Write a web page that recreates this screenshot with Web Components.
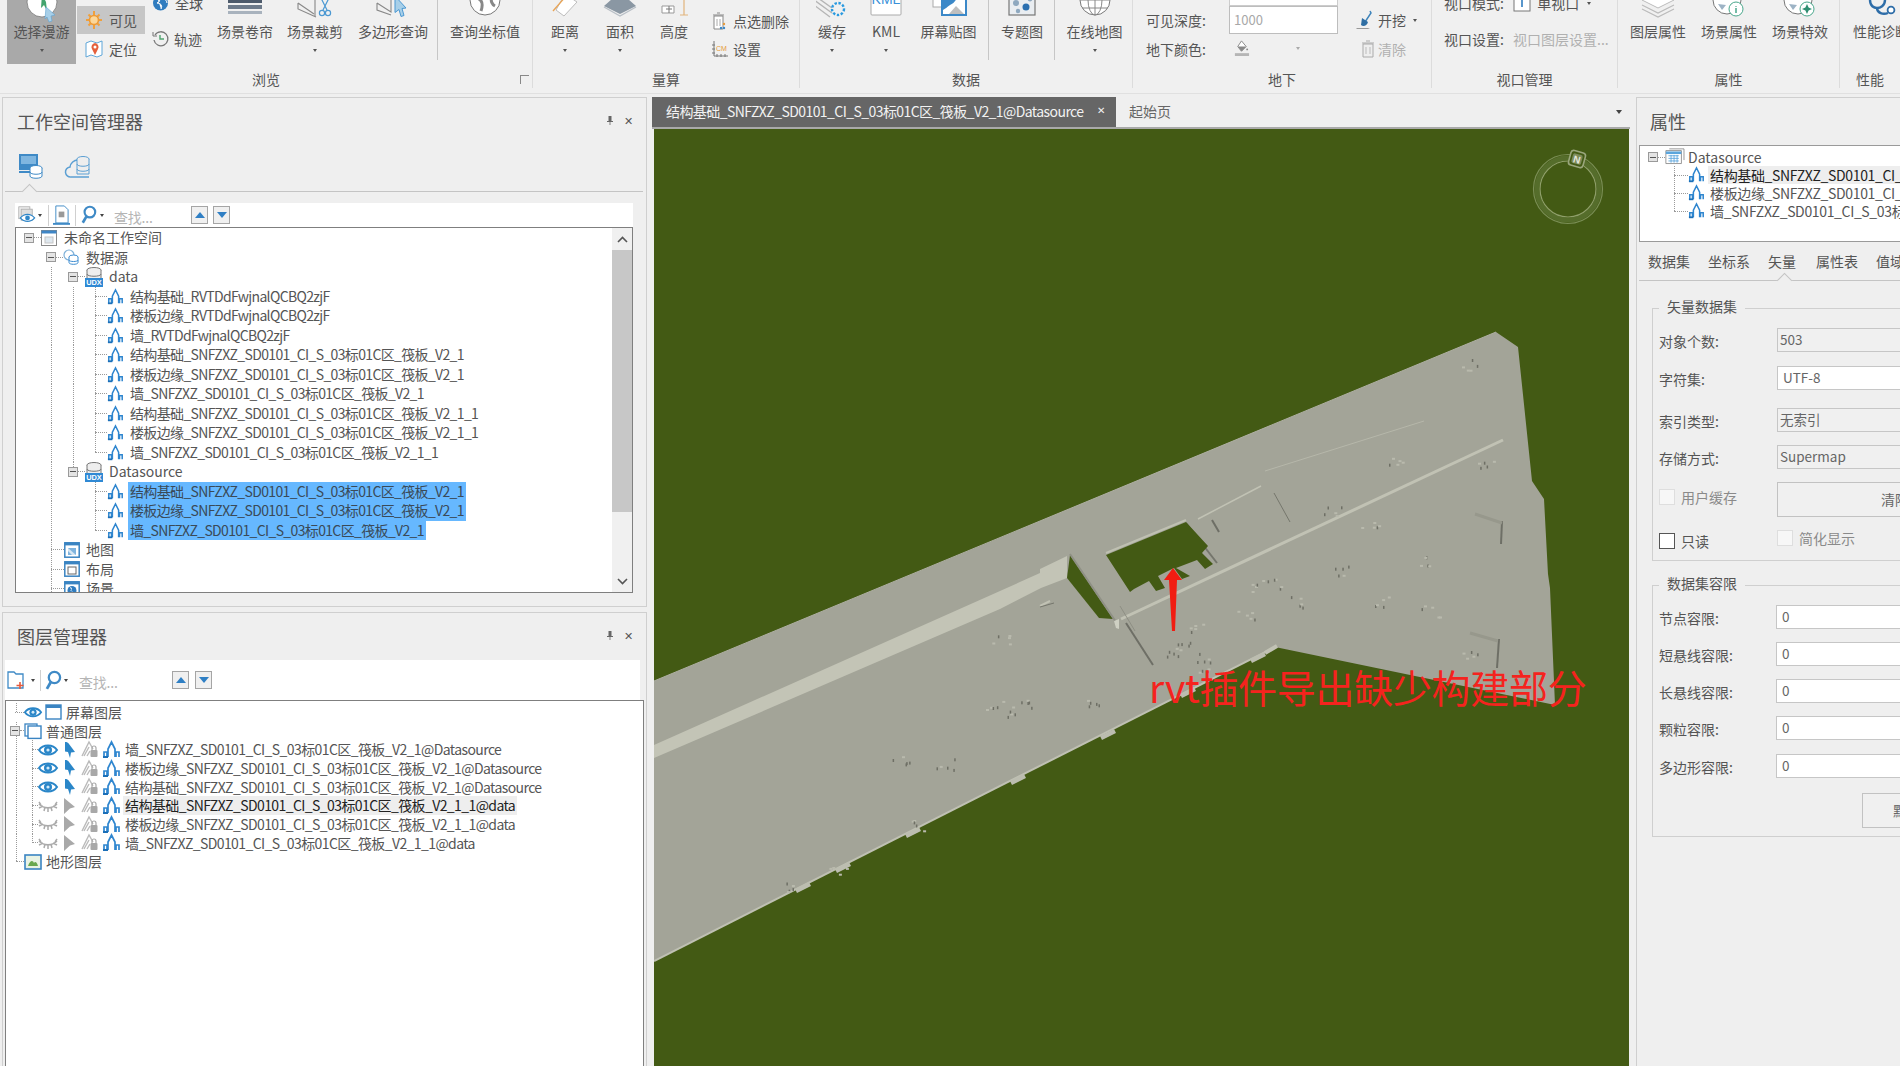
<!DOCTYPE html>
<html lang="zh"><head><meta charset="utf-8"><title>SuperMap</title>
<style>
html,body{margin:0;height:100%;overflow:hidden;background:#efefef}
body{font:14px/18px "Noto Sans CJK SC","Noto Sans",sans-serif;color:#555;width:1900px;height:1066px}
</style></head><body>
<x-app>
  <x-ribbon slot="ribbon">
    <x-group label="浏览" width="533" launcher>
      <x-big width="69" left="7" icon="select" w="40" active dd>选择漫游</x-big>
      <x-col width="68" left="1">
        <x-small icon="sun" w="18" pad="8" h="28" top="6" active>可见</x-small>
        <x-small icon="pin" w="18" pad="8" h="29" top="0">定位</x-small>
      </x-col>
      <x-col width="65">
        <x-small icon="globesm" w="17" pad="7" h="28" top="-11">全球</x-small>
        <x-small icon="clock" w="16" pad="7" h="28" top="8">轨迹</x-small>
      </x-col>
      <x-big width="70" icon="curtain" w="34">场景卷帘</x-big>
      <x-big width="70" icon="clip" w="36" dd>场景裁剪</x-big>
      <x-big width="86" icon="polyq" w="36">多边形查询</x-big>
      <x-sep></x-sep>
      <x-big width="92" icon="globeg" w="32">查询坐标值</x-big>
    </x-group>
    <x-group label="量算" width="267">
      <x-big width="60" left="2" icon="ruler" w="28" dd>距离</x-big>
      <x-big width="50" icon="area" w="34" dd>面积</x-big>
      <x-big width="58" icon="height" w="32">高度</x-big>
      <x-col width="97">
        <x-small icon="trashdot" w="15" pad="9" gap="6" h="28" top="7">点选删除</x-small>
        <x-small icon="cm" w="16" pad="9" gap="5" h="28" top="0">设置</x-small>
      </x-col>
    </x-group>
    <x-group label="数据" width="333">
      <x-big width="60" left="2" icon="cache" w="32" dd>缓存</x-big>
      <x-big width="48" icon="kml" w="32" dd>KML</x-big>
      <x-big width="77" icon="shot" w="36">屏幕贴图</x-big>
      <x-sep></x-sep>
      <x-big width="62" left="1" icon="theme" w="32">专题图</x-big>
      <x-sep></x-sep>
      <x-big width="75" left="1" icon="wire" w="34" dd>在线地图</x-big>
    </x-group>
    <x-group label="地下" width="299">
      <x-under></x-under>
    </x-group>
    <x-group label="视口管理" width="186">
      <x-viewport></x-viewport>
    </x-group>
    <x-group label="属性" width="222">
      <x-big width="70" left="5" icon="layersw" w="34">图层属性</x-big>
      <x-big width="72" icon="sceneinfo" w="34">场景属性</x-big>
      <x-big width="70" icon="scenefx" w="34">场景特效</x-big>
    </x-group>
    <x-group label="性能" width="60" last>
      <x-big width="72" left="5" icon="steth" w="30">性能诊断</x-big>
    </x-group>
  </x-ribbon>

  <x-panel slot="left" title-text="工作空间管理器" height="510">
    <x-wstabs></x-wstabs>
    <x-findbar kind="ws"></x-findbar>
    <x-tree height="366" scroll top="0" rh="19.5">
      <x-row ind="8" exp ic="wsp:16:7">未命名工作空间</x-row>
      <x-row ind="30" exp ic="dsrc:16:7">数据源</x-row>
      <x-row ind="52" exp ic="udx:18:6" gd="35">data</x-row>
      <x-row ind="79" stub="12" ic="vec:17:6" gd="35,57,79">结构基础_RVTDdFwjnalQCBQ2zjF</x-row>
      <x-row ind="79" stub="12" ic="vec:17:6" gd="35,57,79">楼板边缘_RVTDdFwjnalQCBQ2zjF</x-row>
      <x-row ind="79" stub="12" ic="vec:17:6" gd="35,57,79">墙_RVTDdFwjnalQCBQ2zjF</x-row>
      <x-row ind="79" stub="12" ic="vec:17:6" gd="35,57,79">结构基础_SNFZXZ_SD0101_CI_S_03标01C区_筏板_V2_1</x-row>
      <x-row ind="79" stub="12" ic="vec:17:6" gd="35,57,79">楼板边缘_SNFZXZ_SD0101_CI_S_03标01C区_筏板_V2_1</x-row>
      <x-row ind="79" stub="12" ic="vec:17:6" gd="35,57,79">墙_SNFZXZ_SD0101_CI_S_03标01C区_筏板_V2_1</x-row>
      <x-row ind="79" stub="12" ic="vec:17:6" gd="35,57,79">结构基础_SNFZXZ_SD0101_CI_S_03标01C区_筏板_V2_1_1</x-row>
      <x-row ind="79" stub="12" ic="vec:17:6" gd="35,57,79">楼板边缘_SNFZXZ_SD0101_CI_S_03标01C区_筏板_V2_1_1</x-row>
      <x-row ind="79" stub="12" ic="vec:17:6" gd="35,57" gh="79">墙_SNFZXZ_SD0101_CI_S_03标01C区_筏板_V2_1_1</x-row>
      <x-row ind="52" exp ic="udx:18:6" gd="35" gh="57">Datasource</x-row>
      <x-row ind="79" stub="12" ic="vec:17:6" gd="35,79" sel>结构基础_SNFZXZ_SD0101_CI_S_03标01C区_筏板_V2_1</x-row>
      <x-row ind="79" stub="12" ic="vec:17:6" gd="35,79" sel>楼板边缘_SNFZXZ_SD0101_CI_S_03标01C区_筏板_V2_1</x-row>
      <x-row ind="79" stub="12" ic="vec:17:6" gd="35" gh="79" sel>墙_SNFZXZ_SD0101_CI_S_03标01C区_筏板_V2_1</x-row>
      <x-row ind="35" stub="13" ic="map:16:6" gd="35">地图</x-row>
      <x-row ind="35" stub="13" ic="lay:16:6" gd="35">布局</x-row>
      <x-row ind="35" stub="13" ic="scn:16:6" gd="35">场景</x-row>
    </x-tree>
  </x-panel>

  <x-panel slot="left" title-text="图层管理器" height="470" flush>
    <x-findbar kind="layer"></x-findbar>
    <x-tree height="380" top="2" rh="18.67" wide>
      <x-row ind="9" stub="9" ic="eye:18:3,win:17:4" gh="10">屏幕图层</x-row>
      <x-row ind="4" exp stub="4" ic="lyr:18:4" gd="10">普通图层</x-row>
      <x-row ind="26" stub="6" ic="eye:20:4,ptr:14:5,lock:17:4,vec:19:4" gd="10,26" ls="-.59">墙_SNFZXZ_SD0101_CI_S_03标01C区_筏板_V2_1@Datasource</x-row>
      <x-row ind="26" stub="6" ic="eye:20:4,ptr:14:5,lock:17:4,vec:19:4" gd="10,26" ls="-.59">楼板边缘_SNFZXZ_SD0101_CI_S_03标01C区_筏板_V2_1@Datasource</x-row>
      <x-row ind="26" stub="6" ic="eye:20:4,ptr:14:5,lock:17:4,vec:19:4" gd="10,26" ls="-.59">结构基础_SNFZXZ_SD0101_CI_S_03标01C区_筏板_V2_1@Datasource</x-row>
      <x-row ind="26" stub="6" ic="eyex:20:4,ptrg:14:5,lock:17:4,vec:19:4" gd="10,26" ls="-.59" hl>结构基础_SNFZXZ_SD0101_CI_S_03标01C区_筏板_V2_1_1@data</x-row>
      <x-row ind="26" stub="6" ic="eyex:20:4,ptrg:14:5,lock:17:4,vec:19:4" gd="10,26" ls="-.59">楼板边缘_SNFZXZ_SD0101_CI_S_03标01C区_筏板_V2_1_1@data</x-row>
      <x-row ind="26" stub="6" ic="eyex:20:4,ptrg:14:5,lock:17:4,vec:19:4" gd="10" gh="26" ls="-.59">墙_SNFZXZ_SD0101_CI_S_03标01C区_筏板_V2_1_1@data</x-row>
      <x-row ind="10" stub="8" ic="ter:18:4" gh="10">地形图层</x-row>
    </x-tree>
  </x-panel>

  <x-doc slot="center"></x-doc>

  <x-props slot="right"></x-props>
</x-app>

<script>
const vec=c=>`<svg viewBox="0 0 19 17"><path d="M2 16v-5h3v5M6 16V8l3.5-7L13 8v8M14 16v-5h3v5" fill="none" stroke="${c}" stroke-width="1.7"/><path d="M1 16h5" stroke="#1b6fb8" stroke-width="2"/></svg>`;
const eye=`<svg viewBox="0 0 20 14"><path d="M1 7C5 1 15 1 19 7 15 13 5 13 1 7Z" fill="#fff" stroke="#2a86c8" stroke-width="2"/><circle cx="10" cy="7" r="4" fill="#2a86c8"/><circle cx="10" cy="7" r="1.6" fill="#cfe8f8"/></svg>`;
const ICONS={
 vec:vec('#2f86cf'),eye,
 ptr:`<svg viewBox="0 0 14 18"><path d="M3 1c2 0 3 .5 4 2l6 8-4 .5-1 5.5-2-6-3-.5Z" fill="#2a86c8"/></svg>`,
 ptrg:`<svg viewBox="0 0 14 18"><path d="M2 1l11 9-5 1.5L2 17Z" fill="#a9a9a9"/></svg>`,
 eyex:`<svg viewBox="0 0 20 14"><path d="M1 5c5 5 13 5 18 0M3 6 1 3M7 8 6 12M13 8l1 4M17 6l2-3M10 9v4M1 9l4-2M19 9l-4-2" fill="none" stroke="#aaa" stroke-width="1.5"/></svg>`,
 lock:`<svg viewBox="0 0 17 17"><path d="M1 15 8 1l4 7M3 15l5-9M6 15l3-5" fill="none" stroke="#bbb" stroke-width="1.4"/><rect x="9.5" y="9" width="7" height="7" rx="1" fill="#a8a8a8"/><path d="M11 9V7a2 2 0 0 1 4 0v2" fill="none" stroke="#a8a8a8" stroke-width="1.2"/></svg>`,
 wsp:`<svg viewBox="0 0 16 16"><rect x=".5" y=".5" width="15" height="15" fill="#fff" stroke="#8a8a8a"/><rect x=".5" y=".5" width="15" height="3" fill="#3f86c6"/><rect x="4" y="7" width="8" height="6" fill="#dfe8ef" stroke="#c5c5c5"/></svg>`,
 dsrc:`<svg viewBox="0 0 16 16"><circle cx="6" cy="6" r="5" fill="none" stroke="#7fb1d8" stroke-width="1.2"/><ellipse cx="10.5" cy="8" rx="4.5" ry="2" fill="#fff" stroke="#3b8bd0"/><path d="M6 8v5.5c0 2.4 9 2.4 9 0V8" fill="#fff" stroke="#3b8bd0"/><path d="M6 11c0 2 9 2 9 0" fill="none" stroke="#3b8bd0"/></svg>`,
 udx:`<svg viewBox="0 0 18 20"><ellipse cx="9" cy="3" rx="7" ry="2.5" fill="#eee" stroke="#777"/><path d="M2 3v9h14V3" fill="#eee" stroke="#777"/><path d="M2 7c0 3 14 3 14 0" fill="none" stroke="#777"/><rect y="11" width="18" height="9" fill="#2f89d4"/><text x="9" y="18.4" font-size="7.4" font-weight="700" fill="#fff" text-anchor="middle" font-family="Liberation Sans">UDX</text></svg>`,
 map:`<svg viewBox="0 0 16 16"><rect x=".8" y=".8" width="14.4" height="14.4" fill="#fff" stroke="#3a84c2" stroke-width="1.5"/><rect x=".8" y=".8" width="14.4" height="2.6" fill="#3a84c2"/><path d="M4 6h8v7H4Z" fill="#7fb4de"/><path d="M4 6l8 7H8L4 9Z" fill="#d5e6f3"/></svg>`,
 lay:`<svg viewBox="0 0 16 16"><rect x=".8" y=".8" width="14.4" height="14.4" fill="#fff" stroke="#3a84c2" stroke-width="1.5"/><rect x=".8" y=".8" width="14.4" height="2.6" fill="#3a84c2"/><rect x="4" y="6" width="8" height="7" fill="#fff" stroke="#666"/></svg>`,
 scn:`<svg viewBox="0 0 16 16"><rect x=".8" y=".8" width="14.4" height="14.4" fill="#fff" stroke="#3a84c2" stroke-width="1.5"/><rect x=".8" y=".8" width="14.4" height="2.6" fill="#3a84c2"/><circle cx="8" cy="9.5" r="4.5" fill="#2f7cbf"/><path d="M6 6c3 1 2 3 0 4 2 0 4 1 3 3" fill="#fff"/></svg>`,
 win:`<svg viewBox="0 0 17 16"><rect x="1" y="1" width="15" height="14" fill="#fff" stroke="#3a84c2" stroke-width="1.4"/><rect x="1" y="1" width="15" height="3" fill="#3a84c2"/></svg>`,
 lyr:`<svg viewBox="0 0 18 16"><rect x="1" y="1" width="12" height="12" fill="#fff" stroke="#3a84c2" stroke-width="1.3"/><rect x="4" y="3" width="13" height="12.4" fill="#fff" stroke="#3a84c2" stroke-width="1.4"/></svg>`,
 ter:`<svg viewBox="0 0 18 16"><rect x="1" y="1" width="16" height="14" fill="#e9f3e4" stroke="#3a84c2" stroke-width="1.6"/><path d="M4 12c2-6 5-6 6-3 1-2 3-1 4 3Z" fill="#69a84f"/></svg>`,
 select:`<svg viewBox="0 0 40 25"><circle cx="20" cy="2" r="15" fill="#fff" stroke="#777" stroke-width=".8"/><path d="M20-6l4 8 1 9-3-6-3 3Z" fill="#43a46f"/><path d="M24 7l9 8-4 1 1 5-3 1-2-5-2 2Z" fill="#a7cfe8" stroke="#5fa3d1" stroke-width=".6"/></svg>`,
 sun:`<svg viewBox="0 0 18 20"><g stroke="#f0a03c" stroke-width="2"><path d="M9 1v4M9 15v4M1 10h4M13 10h4M3.5 4.5l3 3M11.5 12.5l3 3M3.5 15.5l3-3M11.5 7.5l3-3"/></g><circle cx="9" cy="10" r="4.5" fill="#fbd79a" stroke="#ee9a35" stroke-width="1.6"/></svg>`,
 pin:`<svg viewBox="0 0 18 20"><path d="M1 4l5-2 6 2 5-2v14l-5 2-6-2-5 2Z" fill="#fff" stroke="#5fa6d8"/><path d="M11 4a4 4 0 0 1 3 6l-3 6-3-6a4 4 0 0 1 3-6Z" fill="#e5603c" transform="translate(-1 0)"/><circle cx="10" cy="8" r="1.5" fill="#fff"/></svg>`,
 globesm:`<svg viewBox="0 0 17 18"><circle cx="8.5" cy="9" r="7.5" fill="#2f7cbf"/><path d="M5 3c4 2 3 5 0 6 3 0 6 2 4 6M12 3c1 3 3 4 3 6" fill="#fff" stroke="#fff"/></svg>`,
 clock:`<svg viewBox="0 0 16 18"><path d="M3 5a7 7 0 1 1-1 5" fill="none" stroke="#777" stroke-width="1.3"/><path d="M1 2v4h4" fill="none" stroke="#777"/><path d="M8 5v4h4" fill="none" stroke="#4fa36f" stroke-width="1.4"/></svg>`,
 curtain:`<svg viewBox="0 0 34 25"><rect y="0" width="34" height="3" fill="#4d5a6b"/><rect x="0" y="5" width="34" height="4" fill="#6d7a8a"/><rect x="0" y="11" width="34" height="3" fill="#a8b2bd"/></svg>`,
 clip:`<svg viewBox="0 0 36 25"><path d="M1 3l16 11M1 3v6l18 8M18-5v22" fill="none" stroke="#888" stroke-width="1.1"/><g stroke="#4b98d2" fill="none" stroke-width="1.2"><path d="M24-2l6 12M32-2l-6 12"/><circle cx="25" cy="13" r="2.6"/><circle cx="31" cy="13" r="2.6"/></g></svg>`,
 polyq:`<svg viewBox="0 0 36 25"><path d="M2 3l14 9V-4M2 3v7l14 5" fill="none" stroke="#888" stroke-width="1.1"/><path d="M20-4l11 12-4 .5 2 7-3 1-2-7-4 3Z" fill="#a7cfe8" stroke="#4b98d2"/></svg>`,
 globeg:`<svg viewBox="0 0 32 25"><circle cx="16" cy="0" r="15" fill="#fff" stroke="#777"/><path d="M8-2c6 2 6 7 4 13M24-5c-4 6 0 10 2 11" fill="none" stroke="#888" stroke-width="3"/></svg>`,
 ruler:`<svg viewBox="0 0 28 25"><path d="M14-6l12 8-13 14-8-6Z" fill="#fff" stroke="#bdbdbd"/><path d="M2 11L16-5" stroke="#e9a353" stroke-width="1.3"/></svg>`,
 area:`<svg viewBox="0 0 34 25"><path d="M17-8l16 14-16 8L1 6Z" fill="#8a97a3"/><path d="M1 7l16 9 16-9" fill="none" stroke="#b8bfc6" stroke-width="1.4"/></svg>`,
 height:`<svg viewBox="0 0 32 25"><path d="M4 6h12v7H4Z" fill="#fff" stroke="#999"/><path d="M8 9h6M11 6v7" stroke="#777"/><path d="M26-6v21M22 15h8" stroke="#e2b47c" stroke-width="1.2"/></svg>`,
 trashdot:`<svg viewBox="0 0 15 18"><path d="M2 4h9v13H2Z" fill="#fff" stroke="#888"/><path d="M1 3h11M5 1h3" stroke="#888"/><path d="M5 7v7M8 7v7" stroke="#aaa"/><circle cx="12" cy="12" r="1.2" fill="#e59a3c"/><circle cx="12" cy="16" r="1.2" fill="#3a88c8"/><circle cx="9" cy="16" r="1.2" fill="#3a88c8"/></svg>`,
 cm:`<svg viewBox="0 0 16 18"><path d="M2 1v15h14" fill="none" stroke="#777"/><path d="M0 13h3M0 9h3M0 5h3M5 14v3M9 14v3M13 14v3" stroke="#777"/><text x="4" y="11" font-size="7" fill="#e59a3c" font-family="Liberation Sans">CM</text></svg>`,
 cache:`<svg viewBox="0 0 32 25"><g stroke="#b5b5b5" stroke-width="1.4"><path d="M-2 0l18 13M2-2l14 10M-2 5l16 12"/></g><circle cx="22" cy="9" r="6" fill="none" stroke="#2a9ae0" stroke-width="2.4" stroke-dasharray="2.4 1.6"/></svg>`,
 kml:`<svg viewBox="0 0 32 25"><rect x="1" y="-10" width="30" height="25" rx="1" fill="#fff" stroke="#aaa"/><text x="16" y="4" font-size="14" fill="#3a90d8" text-anchor="middle" font-family="Liberation Sans">KML</text></svg>`,
 shot:`<svg viewBox="0 0 36 25"><rect x="2" y="-8" width="22" height="15" fill="#fff" stroke="#aaa"/><rect x="11" y="-6" width="24" height="21" fill="#fff" stroke="#3b88c8" stroke-width="2"/><path d="M12-5h15c-2 6-4 8-8 10-3 2-5 4-7 5Z" fill="#3b88c8"/><path d="M18 14l7-8 8 8Z" fill="#bfbfbf"/></svg>`,
 theme:`<svg viewBox="0 0 32 25"><rect x="3" y="-8" width="26" height="23" fill="#e9edf1" stroke="#777" stroke-width="1.2"/><circle cx="20" cy="7" r="3.5" fill="#2a6fb0"/><circle cx="10" cy="3" r="3" fill="#8ea8bf"/><circle cx="24" cy="-1" r="2.4" fill="#8ea8bf"/><circle cx="12" cy="11" r="2.2" fill="#8ea8bf"/></svg>`,
 wire:`<svg viewBox="0 0 34 25"><circle cx="17" cy="0" r="15" fill="#fff" stroke="#777"/><path d="M2 0h30M4 8h26M17-15v30" stroke="#888" fill="none"/><ellipse cx="17" cy="0" rx="7" ry="15" fill="none" stroke="#888"/></svg>`,
 layersw:`<svg viewBox="0 0 34 25"><path d="M17-8l16 8-16 8L1 0Z" fill="#fff" stroke="#bbb"/><path d="M1 5l16 8 16-8M1 9l16 8 16-8" fill="none" stroke="#bbb" stroke-width="1.2"/></svg>`,
 sceneinfo:`<svg viewBox="0 0 34 25"><circle cx="15" cy="0" r="14" fill="#fff" stroke="#777"/><path d="M6 4l8 1-4 5Z" fill="#9db3c5"/><circle cx="24" cy="9" r="7" fill="#fff" stroke="#48a78b"/><path d="M24 6v.8M24 8v5" stroke="#48a78b" stroke-width="1.5"/></svg>`,
 scenefx:`<svg viewBox="0 0 34 25"><circle cx="15" cy="0" r="14" fill="#fff" stroke="#777"/><path d="M6 4l8 1-4 5Z" fill="#9db3c5"/><circle cx="24" cy="9" r="7" fill="#fff" stroke="#48a78b"/><path d="M24 4l1.6 3.4L29 9l-3.4 1.6L24 14l-1.6-3.4L19 9l3.4-1.6Z" fill="#2f8f72"/></svg>`,
 steth:`<svg viewBox="0 0 30 25"><path d="M4-8v8c0 6 4 8 7 8s8-2 8-8v-8" fill="none" stroke="#2e6da8" stroke-width="2.4"/><path d="M11 8c0 5 6 7 11 5" fill="none" stroke="#2e6da8" stroke-width="2.4"/><circle cx="25" cy="10" r="3.4" fill="#fff" stroke="#2e6da8" stroke-width="1.8"/></svg>`,
 shovel:`<svg viewBox="0 0 18 20"><path d="M14 1l1 2-6 9" stroke="#3e84bb" stroke-width="1.5" fill="none"/><path d="M6 8l6 4c-1 4-5 5-7 3Z" fill="#2f6ea3"/><path d="M1 18h11l2 1H0Z" fill="#999"/></svg>`,
 trashg:`<svg viewBox="0 0 14 18"><path d="M2 4h10v13H2Z" fill="#eee" stroke="#aaa"/><path d="M1 3h12M5 1h4" stroke="#aaa"/><path d="M5 7v7M9 7v7" stroke="#bbb"/></svg>`,
 bucket:`<svg viewBox="0 0 18 20"><path d="M9 2l5 6-5 5-4-5Z" fill="#fff" stroke="#888"/><path d="M5 8h9l-5 5Z" fill="#888"/><circle cx="15" cy="11" r="1" fill="#888"/><path d="M2 15h15v3H2Z" fill="#b5b5b5"/></svg>`,
 view1:`<svg viewBox="0 0 18 18"><rect x="1" y="1" width="16" height="16" fill="#fff" stroke="#777"/><path d="M9 5v8" stroke="#2f7cbf" stroke-width="1.6"/></svg>`,
 eyebox:`<svg viewBox="0 0 24 24"><rect x="1" y="1" width="14" height="15" fill="#eee" stroke="#aaa"/><rect x="4" y="4" width="14" height="14" fill="#ddd" stroke="#aaa"/><path d="M3 15c5-6 13-6 18 0-5 6-13 6-18 0Z" fill="#fff" stroke="#2f86c8" stroke-width="1.6"/><circle cx="12" cy="15" r="3" fill="#2f86c8"/></svg>`,
 page:`<svg viewBox="0 0 18 22"><path d="M3 1h9l4 4v14H3Z" fill="#fff" stroke="#3f8ac6"/><rect x="6" y="7" width="6" height="6" fill="#999"/><rect x="0" y="19" width="18" height="2" fill="#3f8ac6"/></svg>`,
 lens:`<svg viewBox="0 0 18 22"><circle cx="10" cy="8" r="6" fill="#fff" stroke="#3f8ac6" stroke-width="2.4"/><path d="M6 13l-4 7" stroke="#3f8ac6" stroke-width="3"/></svg>`,
 newlyr:`<svg viewBox="0 0 18 22"><path d="M1 3h6l2 2h7v14H1Z" fill="#fff" stroke="#3f8ac6" stroke-width="1.3"/><path d="M13 13v7M9.5 16.5h7" stroke="#e55a3c" stroke-width="1.6"/></svg>`,
 tabws:`<svg viewBox="0 0 24 26"><rect x="1" y="1" width="19" height="16" fill="#3f8ac6"/><rect x="3" y="3" width="15" height="8" fill="#7fb6e0"/><path d="M1 19h12" stroke="#3f8ac6" stroke-width="2"/><ellipse cx="18" cy="15" rx="6" ry="2.5" fill="#fff" stroke="#3f8ac6"/><path d="M12 15v8c0 3 12 3 12 0v-8" fill="#fff" stroke="#3f8ac6"/><path d="M12 19c0 3 12 3 12 0" fill="none" stroke="#3f8ac6"/></svg>`,
 tabcl:`<svg viewBox="0 0 26 26"><path d="M7 24a5 5 0 0 1-1-10 8 8 0 0 1 8-7" fill="none" stroke="#5b9fd3" stroke-width="1.5"/><path d="M7 24h18" stroke="#5b9fd3" stroke-width="1.5"/><ellipse cx="19" cy="6" rx="6" ry="2.5" fill="#eee" stroke="#5b9fd3"/><path d="M13 6v15h12V6" fill="#eee" stroke="#5b9fd3"/><path d="M13 11c0 3 12 3 12 0M13 16c0 3 12 3 12 0" fill="none" stroke="#5b9fd3"/></svg>`,
 dsb:`<svg viewBox="0 0 22 20"><path d="M1 3h18v15H1Z" fill="#fff" stroke="#8a8a8a"/><path d="M5 1h17v13" fill="none" stroke="#8a8a8a"/><path d="M1 4h18v3H1Z" fill="#5ba5dc"/><path d="M4 9h12M4 12h12M4 15h12M7 8v9M10.5 8v9M14 8v9" stroke="#5ba5dc"/></svg>`
};
function def(name,hostCss,fn){
  customElements.define(name,class extends HTMLElement{
    constructor(){super();this.attachShadow({mode:'open'});}
    connectedCallback(){
      const a=n=>this.getAttribute(n), has=n=>this.hasAttribute(n);
      const [css,html]=fn(a,has,this);
      this.shadowRoot.innerHTML=`<style>:host{${hostCss}}${css||''}</style>${html}`;
    }
  });
}
def('x-icon','display:inline-flex;flex:none',(a)=>[`svg{display:block;width:${a('w')}px;height:auto;overflow:visible}`,ICONS[a('name')]||'']);

def('x-app','display:grid;grid-template-columns:650px 986px 264px;grid-template-rows:94px 972px;width:1900px;height:1066px;overflow:hidden',()=>[
 `.r{grid-column:1/4}.l{display:flex;flex-direction:column;padding:3px 3px 0 2px;gap:5px;overflow:hidden}.c,.p{min-width:0;overflow:hidden}`,
 `<div class="r"><slot name="ribbon"></slot></div><div class="l"><slot name="left"></slot></div><div class="c"><slot name="center"></slot></div><div class="p"><slot name="right"></slot></div>`]);

def('x-ribbon','display:flex;height:94px;box-sizing:border-box;border-bottom:1px solid #e0e0e0;background:#f0f0f0;overflow:hidden',()=>['','<slot></slot>']);

def('x-group','display:flex;flex-direction:column;flex:none;box-sizing:border-box;height:88px',(a,has)=>[
 `:host{width:${a('width')}px;${has('last')?'':'border-right:1px solid #dcdcdc;'}}
  .b{display:flex;height:71px;flex:none}
  .l{height:19px;line-height:17px;text-align:center;display:flex;justify-content:center}
  .lc{width:9px;height:9px;align-self:center;margin-left:auto;margin-right:3px;border:1px solid #888;border-width:1px 0 0 1px;box-sizing:border-box}
  .t{flex:1;text-align:center;${has('launcher')?'padding-left:12px':''}}`,
 `<div class="b"><slot></slot></div><div class="l"><span class="t">${a('label')}</span>${has('launcher')?'<span class="lc"></span>':''}</div>`]);

def('x-big','display:flex;flex-direction:column;align-items:center;flex:none;box-sizing:border-box;height:64px;overflow:hidden',(a,has)=>[
 `:host{width:${a('width')}px;margin-left:${a('left')||0}px;${has('active')?'background:#a9a9a9':''}}
  .i{height:23px;display:flex;align-items:flex-start;flex:none;overflow:hidden}
  .t{height:16px;line-height:16px;white-space:nowrap}
  .d{width:0;height:0;margin-top:10px;border:2px solid transparent;border-top:3px solid #555;border-bottom:0}`,
 `<div class="i"><x-icon name="${a('icon')}" w="${a('w')}"></x-icon></div><div class="t"><slot></slot></div>${has('dd')?'<div class="d"></div>':''}`]);

def('x-col','display:flex;flex-direction:column;flex:none',(a)=>[`:host{width:${a('width')}px;margin-left:${a('left')||0}px}`,'<slot></slot>']);

def('x-small','display:flex;align-items:center;flex:none;box-sizing:border-box;white-space:nowrap',(a,has)=>[
 `:host{height:${a('h')}px;margin-top:${a('top')||0}px;padding-left:${a('pad')||0}px;gap:${a('gap')||6}px;${has('active')?'background:#c6c6c6;':''}${has('disabled')?'color:#b0b0b0;':''}}`,
 `<x-icon name="${a('icon')}" w="${a('w')}"></x-icon><slot></slot>`]);

def('x-sep','display:block;flex:none;width:1px;height:60px;background:#c6c6c6;margin:0 1px',()=>['','']);

def('x-under','display:grid;grid-template-columns:83px 109px auto;grid-template-rows:6px 28px 29px;padding-left:13px;width:100%',()=>[
 `.top{grid-column:2;border:1px solid #ccc;border-top:0;background:#fff;box-sizing:border-box}
  .lb{display:flex;align-items:center}
  .in{background:#fff;border:1px solid #bdbdbd;box-sizing:border-box;color:#a8a8a8;font-size:13px;padding-left:4px;display:flex;align-items:center}
  .btm{display:flex;align-items:center;padding-left:4px;gap:46px}
  .d{width:0;height:0;border:2px solid transparent;border-top:3px solid #aaa;border-bottom:0}
  .s{display:flex;align-items:center;padding-left:18px;gap:4px;white-space:nowrap}
  .s .d{margin-left:3px}
  .g{color:#b0b0b0;padding-left:23px;gap:3px}
  .f{grid-row:1;grid-column:1}`,
 `<div class="f"></div><div class="top"></div><div></div>
  <div class="lb">可见深度:</div><div class="in">1000</div><div class="s"><x-icon name="shovel" w="18"></x-icon>开挖<span class="d" style="border-top-color:#555"></span></div>
  <div class="lb">地下颜色:</div><div class="btm"><x-icon name="bucket" w="17"></x-icon><span class="d"></span></div><div class="s g"><x-icon name="trashg" w="14"></x-icon>清除</div>`]);

def('x-viewport','display:flex;flex-direction:column;gap:10px;margin-top:-10px;padding-left:12px;white-space:nowrap',()=>[
 `.r{display:flex;height:26px;align-items:center}.k{width:69px}.g{color:#b0b0b0}
  .d{width:0;height:0;border:2px solid transparent;border-top:3px solid #555;border-bottom:0;margin-left:8px}`,
 `<div class="r"><span class="k">视口模式:</span><x-icon name="view1" w="18"></x-icon>&nbsp;&nbsp;单视口<span class="d"></span></div>
  <div class="r"><span class="k">视口设置:</span><span class="g">视口图层设置...</span></div>`]);

def('x-panel','display:block;flex:none;box-sizing:border-box;border:1px solid #cfcfcf;overflow:hidden;background:#efefef',(a)=>[
 `:host{height:${a('height')}px}
  .h{display:flex;align-items:center;height:47px;box-sizing:border-box;padding:0 13px 2px 14px;font-size:18px;line-height:24px;color:#555}
  .t{flex:1}
  .pin{margin-right:11px;display:flex}
  .x{font-size:11px;line-height:14px;color:#555;font-family:"Liberation Sans"}`,
 `<div class="h"><span class="t">${a('title-text')}</span><span class="pin"><svg width="6" height="9" viewBox="0 0 6 9"><path d="M1.5 0h3v5h1.5v1H3.4v3h-.8V6H0V5h1.5Z" fill="#666"/></svg></span><span class="x">✕</span></div><slot></slot>`]);

def('x-wstabs','display:block;box-sizing:border-box;height:47px;margin:0 3px 0 2px;border-bottom:1px solid #c4c4c4',()=>[
 `.r{display:flex;gap:22px;padding:8px 0 0 13px}
  .n{width:10px;height:10px;border:1px solid #c4c4c4;border-width:1px 0 0 1px;transform:rotate(45deg);background:#efefef;margin:7px 0 0 19px}`,
 `<div class="r"><x-icon name="tabws" w="24"></x-icon><x-icon name="tabcl" w="26"></x-icon></div><div class="n"></div>`]);

def('x-findbar','display:flex;align-items:center;background:#fff;flex:none',(a)=>{
 const ws=a('kind')==='ws';
 return [`:host{${ws?'margin:11px 13px 0 12px;height:24px;padding-left:3px':'margin:0 6px 0 2px;height:40px;padding-left:2px'}}
  .d{width:0;height:0;border:2px solid transparent;border-top:3px solid #444;border-bottom:0}
  .s{width:1px;height:21px;background:#d0d0d0}
  .f{color:#b5b5b5;font-size:14px;box-sizing:border-box;width:${ws?87:104}px;padding-left:${ws?10:11}px;margin-top:3px;letter-spacing:-.2px}
  .b{width:17px;height:18px;box-sizing:border-box;border:1px solid #a5a5a5;background:#f0f0f0;display:flex;align-items:center;justify-content:center;margin-right:${ws?5:6}px}
  .u{border:5px solid transparent;border-bottom:6px solid #2f7fc4;border-top:0}
  .w{border:5px solid transparent;border-top:6px solid #2f7fc4;border-bottom:0}`,
 (ws?`<x-icon name="eyebox" w="19"></x-icon><span class="d" style="margin:0 6px 0 1px"></span><span class="s" style="margin-right:4px"></span><x-icon name="page" w="17"></x-icon><span class="s" style="margin:0 5px"></span><x-icon name="lens" w="16"></x-icon><span class="d" style="margin-left:3px"></span>`
    :`<x-icon name="newlyr" w="18"></x-icon><span class="d" style="margin:0 5px 0 6px"></span><span class="s" style="margin-right:4px"></span><x-icon name="lens" w="17"></x-icon><span class="d" style="margin-left:2px"></span>`)
 +`<span class="f">查找...</span><span class="b"><span class="u"></span></span><span class="b"><span class="w"></span></span>`];
});

def('x-tree','display:flex;box-sizing:border-box;background:#fff;border:1px solid #7f7f7f;overflow:hidden;flex:none',(a,has)=>[
 `:host{height:${a('height')}px;--rh:${a('rh')}px;${has('scroll')?'margin:0 13px 0 12px':'margin:0 2px 0 2px'}}
  .c{flex:1;min-width:0;padding-top:${a('top')}px;overflow:hidden}
  .sb{width:20px;flex:none;background:#f0f0f0;display:flex;flex-direction:column;align-items:center}
  .a{height:22px;flex:none;display:flex;align-items:center;justify-content:center}
  .th{width:20px;height:262px;background:#c7c7c7;flex:none}.sp{flex:1}
  svg{width:11px;height:7px}`,
 `<div class="c"><slot></slot></div>`+(has('scroll')?`<div class="sb"><div class="a"><svg viewBox="0 0 11 7"><path d="M1 6l4.5-4.5L10 6" fill="none" stroke="#555" stroke-width="1.6"/></svg></div><div class="th"></div><div class="sp"></div><div class="a"><svg viewBox="0 0 11 7"><path d="M1 1l4.5 4.5L10 1" fill="none" stroke="#555" stroke-width="1.6"/></svg></div></div>`:'')]);

def('x-row','display:flex;align-items:center;white-space:nowrap;height:var(--rh)',(a,has,el)=>{
 const dot='repeating-linear-gradient(#9a9a9a 0 1px,transparent 1px 2px)';
 const bg=[],pos=[],size=[];
 (a('gd')||'').split(',').filter(Boolean).forEach(x=>{bg.push(dot);pos.push(x+'px 0');size.push('1px 100%');});
 (a('gh')||'').split(',').filter(Boolean).forEach(x=>{bg.push(dot);pos.push(x+'px 0');size.push('1px 50%');});
 const stubW=a('stub')||7;
 const ics=(a('ic')||'').split(',').map(s=>s.split(':'));
 let icons='';ics.forEach((c,i)=>{icons+=`<x-icon name="${c[0]}" w="${c[1]}"${i<ics.length-1?` style="margin-right:${c[2]}px"`:''}></x-icon>`});
 const g=+ics[ics.length-1][2];
 const ls=a('ls')||(el.textContent.includes('_')?'-.65':'0');
 return [`:host{padding-left:${a('ind')}px;${bg.length?`background-image:${bg.join(',')};background-position:${pos.join(',')};background-size:${size.join(',')};background-repeat:no-repeat;`:''}}
  .e{width:10px;height:10px;box-sizing:border-box;border:1px solid #9a9a9a;background:#e4e4e4;flex:none;display:flex;align-items:center;justify-content:center}
  .e i{width:6px;height:1px;background:#555}
  .st{width:${stubW}px;flex:none;height:0;border-top:1px dotted #9a9a9a}
  .t{margin-left:${g-2}px;padding:0 2px;height:var(--rh);line-height:var(--rh);color:#555;letter-spacing:${ls}px;
     ${has('sel')?'background:#66b8ff;color:#3a4a58;':''}${has('hl')?'background:#eeeeee;color:#222;':''}}`,
 `${has('exp')?'<span class="e"><i></i></span>':''}<span class="st"></span>${icons}<span class="t"><slot></slot></span>`];
});

def('x-doc','display:flex;flex-direction:column;height:972px;padding-left:2px;box-sizing:border-box',()=>[
 `.tabs{display:flex;height:32px;margin-top:3px;border-bottom:2px solid #a9a9a9;box-sizing:border-box;align-items:stretch;margin-right:6px;flex:none}
  .act{width:464px;background:#666;color:#f2f2f2;display:flex;align-items:center;padding:0 0 2px 14px;box-sizing:border-box;white-space:nowrap;letter-spacing:-.57px}
  .act span{margin-left:13px;font-size:10px;font-family:"Liberation Sans"}
  .st{padding:5px 0 0 13px;flex:1;color:#666}
  .dr{width:0;height:0;border:3px solid transparent;border-top:4px solid #444;border-bottom:0;align-self:center;margin-right:8px}
  x-map{flex:1;margin:0 7px 0 2px}`,
 `<div class="tabs"><div class="act">结构基础_SNFZXZ_SD0101_CI_S_03标01C区_筏板_V2_1@Datasource<span>✕</span></div><div class="st">起始页</div><div class="dr"></div></div><x-map></x-map>`]);

def('x-map','display:block;position:relative;overflow:hidden;background:#435a14',()=>{
 let seed=7;const rnd=()=>(seed=(seed*16807)%2147483647)/2147483647;
 const clusters=[[996,703],[1006,710],[1030,703],[1194,628],[1181,642],[1260,584],[1272,582],[1472,364],[1333,509],[1369,521],[1394,460],[1484,460],[1472,654],[945,763],[921,824],[794,885],[836,872],[1090,700],[1170,650],[1205,655],[1200,672],[1000,640],[900,760],[1340,570],[1420,560],[1430,610],[1300,600],[1245,615],[1385,600]];
 let marks='';
 clusters.forEach(([x,y])=>{for(let i=0;i<5;i++){const px=x+(rnd()-.5)*20,py=y+(rnd()-.5)*12,d=rnd()>.55;
   marks+=`<rect x="${px.toFixed(1)}" y="${py.toFixed(1)}" width="${d?1.5:3}" height="${d?3:2}" fill="${d?'#6e6f65':'#b9baad'}"/>`;}});
 const lines=[[1126,622,1153,664,'#6e6f66',2],[1212,519,1219,531,'#6e6f66',2],[1186,522,1217,562,'#75766c',2],[1502,520,1501,543,'#6e6f66',2],[1499,638,1497,667,'#6e6f66',2],[1121,618,1503,439,'#c1c2b4',3],[1198,518,1261,485,'#c1c2b4',1.5],[1106,552,1186,519,'#bfc0b2',2],[1265,470,1424,420,'#b6b7aa',1],[1274,492,1290,521,'#75766c',1],[1120,605,1135,630,'#8e8f84',1],[1040,605,1050,600,'#c1c2b4',2],[1040,606,1054,602,'#75766c',1],[1475,513,1502,522,'#97988c',3],[1470,632,1498,640,'#97988c',3],[1277,645,1265,652,'#c1c2b4',4]];
 const svgl=lines.map(l=>`<line x1="${l[0]}" y1="${l[1]}" x2="${l[2]}" y2="${l[3]}" stroke="${l[4]}" stroke-width="${l[5]}"/>`).join('');
 const bumps=[[795,888],[835,868],[905,833],[1010,780],[1100,735],[1180,693],[1250,658]].map(([x,y])=>`<path d="M${x} ${y}l14-7 2 4-14 7Z" fill="#bcbdb0"/>`).join('');
 return [`svg{display:block}
  .note{position:absolute;left:495px;top:533px;font-size:39px;line-height:48px;color:#f5231e;white-space:nowrap;font-weight:400;letter-spacing:-.3px}`,
 `<svg width="975" height="940" viewBox="654 128 975 940">
  <polygon points="654,680 1496,331 1518,346 1532,480 1544,498 1548,573 1550,587 1555,704 1275,646 654,960" fill="#a3a498"/>
  <polygon points="654,744 1000,590 1040,572 1040,568 1067,555 1067,577 1041,587 1000,608 654,757" fill="#c3c4b6"/>
  <path d="M654 960 1275 646" stroke="#bfc0b3" stroke-width="2"/><path d="M654 680 1496 331" stroke="#aeafa2" stroke-width="1"/>
  ${svgl}
  <polygon points="1106,554 1186,521 1208,545 1202,552 1213,563 1205,568 1197,559 1176,567 1190,575 1182,578 1174,567 1158,575 1165,587 1156,590 1149,580 1134,588 1130,591" fill="#435a14"/>
  <polygon points="1070,554 1113,618 1099,617 1067,577" fill="#435a14"/>
  <line x1="1070" y1="553" x2="1116" y2="621" stroke="#8f9085" stroke-width="2"/>
  <polygon points="1114,620 1119,618 1119,628 1116,627" fill="#cfd0c3"/>
  ${marks}${bumps}
  <g fill="none">
    <circle cx="1568" cy="188" r="34.5" stroke="#7a8e55" stroke-width="1.2"/>
    <circle cx="1568" cy="188" r="28" stroke="#8f9f6a" stroke-width="1.2"/>
    <circle cx="1568" cy="188" r="31" stroke="#62793a" stroke-width="5" opacity=".6"/>
  </g>
  <g transform="translate(1577 158) rotate(15)"><rect x="-7.5" y="-7.5" width="15" height="15" rx="3" fill="#435a14" stroke="#9aa67c" stroke-width="1.6"/><rect x="-5" y="-5" width="10" height="10" rx="2" fill="#7d8c5c"/><text y="4" font-size="10" font-weight="700" fill="#e5e8dc" text-anchor="middle" font-family="Liberation Sans">N</text></g>
  <polygon points="1173,567 1182,579 1177,579 1175,630 1172,630 1169,579 1164,579" fill="#f11d12"/>
 </svg><div class="note">rvt插件导出缺少构建部分</div>`];
});

def('x-props','display:block;box-sizing:border-box;height:972px;margin-top:3px;border-left:1px solid #cfcfcf;border-top:1px solid #cfcfcf;overflow:hidden;width:300px',()=>[
 `.h{height:47px;box-sizing:border-box;display:flex;align-items:center;padding:0 0 2px 13px;font-size:18px;line-height:24px}
  .tree{height:97px;margin-left:2px;width:300px;box-sizing:border-box;border:1px solid #9a9a9a;border-right:0;background:#fff;padding-top:2px;--rh:18px}
  .tabs{display:flex;height:39px;align-items:center;white-space:nowrap;box-sizing:border-box;margin-left:2px;border-bottom:1px solid #c4c4c4;padding-left:9px;gap:18px;position:relative}
  .n{position:absolute;left:140px;bottom:-6px;width:10px;height:10px;border:1px solid #c4c4c4;border-width:1px 0 0 1px;transform:rotate(45deg);background:#efefef}
  .w{padding:17px 0 0 15px}
  x-fs+x-fs{margin-top:14px}`,
 `<div class="h">属性</div>
  <div class="tree">
   <x-row ind="8" exp ic="dsb:19:4">Datasource</x-row>
   <x-row ind="34" stub="14" ic="vec:17:5" gd="34" hl ls="-.35">结构基础_SNFZXZ_SD0101_CI_S_03标01C区_筏板_V2_1</x-row>
   <x-row ind="34" stub="14" ic="vec:17:5" gd="34" ls="-.35">楼板边缘_SNFZXZ_SD0101_CI_S_03标01C区_筏板_V2_1</x-row>
   <x-row ind="34" stub="14" ic="vec:17:5" gh="34" ls="-.35">墙_SNFZXZ_SD0101_CI_S_03标01C区_筏板_V2_1</x-row>
  </div>
  <div class="tabs"><span>数据集</span><span>坐标系</span><span style="margin-right:2px">矢量</span><span>属性表</span><span>值域</span><i class="n"></i></div>
  <div class="w">
   <x-fs legend="矢量数据集" h="263">
     <x-prop label="对象个数:" value="503" gray mt="10"></x-prop>
     <x-prop label="字符集:" value="UTF-8" mt="14"></x-prop>
     <x-prop label="索引类型:" value="无索引" gray mt="18"></x-prop>
     <x-prop label="存储方式:" value="Supermap" gray mt="13"></x-prop>
     <x-checks></x-checks>
   </x-fs>
   <x-fs legend="数据集容限" h="262">
     <x-prop label="节点容限:" value="0" mt="9.5" low></x-prop>
     <x-prop label="短悬线容限:" value="0" mt="13.25" low></x-prop>
     <x-prop label="长悬线容限:" value="0" mt="13.25" low></x-prop>
     <x-prop label="颗粒容限:" value="0" mt="13.25" low></x-prop>
     <x-prop label="多边形容限:" value="0" mt="13.25" low></x-prop>
     <x-btn width="90" style="margin:15px 0 0 203px">默认</x-btn>
   </x-fs>
  </div>`]);

def('x-fs','display:block;width:400px',(a)=>[
 `fieldset{margin:0;border:1px solid #cfcfcf;padding:0 6px;height:${a('h')}px;box-sizing:border-box;display:block}
  legend{padding:0 8px 4px;line-height:16px;color:#555}`,
 `<fieldset><legend>${a('legend')}</legend><slot></slot></fieldset>`]);

def('x-prop','display:flex;white-space:nowrap',(a,has)=>[
 `:host{margin-top:${a('mt')}px;height:24px}
  .l{width:${has('low')?117:118}px;flex:none;line-height:24px;padding-top:1px;box-sizing:border-box}
  .v{width:260px;box-sizing:border-box;border:1px solid #c6c6c6;background:${has('gray')?'#f0f0f0':'#fff'};font-size:13.5px;line-height:21px;padding-left:${has('gray')?2:5}px;color:#666}`,
 `<span class="l">${a('label')}</span><span class="v">${a('value')}</span>`]);

def('x-btn','display:block;box-sizing:border-box;height:35px;border:1px solid #c2c2c2;background:#f0f0f0;text-align:center;line-height:33px;color:#666',(a)=>[`:host{width:${a('width')}px}`,'<slot></slot>']);

def('x-check','display:inline-flex;align-items:center;gap:6px;white-space:nowrap',(a,has)=>[
 `i{width:16px;height:16px;box-sizing:border-box;display:block;background:${has('dark')?'#fff':'#f7f7f7'};border:1px solid ${has('dark')?'#555':'#dedede'}}
  span{color:${has('dark')?'#555':'#8a8a8a'}}`,
 `<i></i><span><slot></slot></span>`]);

def('x-checks','display:block',()=>[
 `.a{display:flex;margin-top:13px;align-items:center}.a x-check{width:118px;flex:none;margin-bottom:5px}
  .b{display:flex;margin-top:12px;align-items:flex-start}.b x-check{width:118px;flex:none}`,
 `<div class="a"><x-check>用户缓存</x-check><x-btn width="236">清除</x-btn></div>
  <div class="b"><x-check dark style="margin-top:3px">只读</x-check><x-check>简化显示</x-check></div>`]);
</script>
</body></html>
